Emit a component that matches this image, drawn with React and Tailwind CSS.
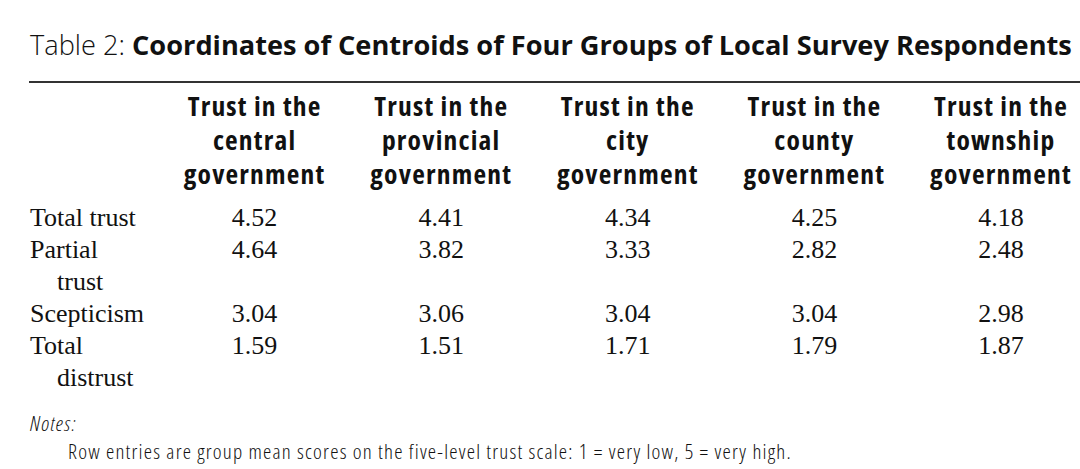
import React from 'react';

const columns = [
  ['Trust in the', 'central', 'government'],
  ['Trust in the', 'provincial', 'government'],
  ['Trust in the', 'city', 'government'],
  ['Trust in the', 'county', 'government'],
  ['Trust in the', 'township', 'government'],
];

const rows = [
  { label: 'Total trust', values: ['4.52', '4.41', '4.34', '4.25', '4.18'] },
  { label: 'Partial', rest: 'trust', values: ['4.64', '3.82', '3.33', '2.82', '2.48'] },
  { label: 'Scepticism', values: ['3.04', '3.06', '3.04', '3.04', '2.98'] },
  { label: 'Total', rest: 'distrust', values: ['1.59', '1.51', '1.71', '1.79', '1.87'] },
];

function App() {
  const sans = "font-['Open_Sans','Liberation_Sans',sans-serif]";
  const serif = "font-['Liberation_Serif','DejaVu_Serif',serif]";

  return (
    <div className="w-[1080px] h-[469px] bg-white text-[#111] overflow-hidden">
      {/* Caption */}
      <div className={`${sans} pl-[30px] pt-[26px] text-[27.2px] leading-[38px] whitespace-nowrap`}>
        <span className="font-light">Table 2: </span>
        <span className="font-bold">Coordinates of Centroids of Four Groups of Local Survey Respondents</span>
      </div>

      <div className="ml-[29px] mt-[17px] h-[2px] bg-[#333]" />

      {/* Table */}
      <div className="w-[1120px] pl-[30px] grid grid-cols-[118px_repeat(5,160px)] gap-x-[26.6px]">
        <div />
        {columns.map((lines, i) => (
          <div
            key={i}
            className={`${sans} font-stretch-condensed tracking-[1.2px] pt-[6px] font-bold text-[27.5px] leading-[34px] text-center whitespace-nowrap`}
          >
            {lines.map((l) => (
              <div key={l}>{l}</div>
            ))}
          </div>
        ))}

        <div className="col-span-6 h-[11px]" />

        {rows.map((row) => (
          <React.Fragment key={row.label}>
            <div className={`${serif} text-[26px] leading-[32px] whitespace-nowrap`}>
              <div>{row.label}</div>
              {row.rest && <div className="pl-[27px]">{row.rest}</div>}
            </div>
            {row.values.map((v, i) => (
              <div key={i} className={`${serif} text-[26px] leading-[32px] text-center`}>
                {v}
              </div>
            ))}
          </React.Fragment>
        ))}
      </div>

      {/* Notes */}
      <div className={`${sans} font-stretch-condensed tracking-[1.2px] pl-[30px] pt-[15px] text-[21px] leading-[28px] font-light`}>
        <div className="italic">Notes:</div>
        <div className="pl-[38px] whitespace-nowrap">
          Row entries are group mean scores on the five-level trust scale: 1 = very low, 5 = very high.
        </div>
      </div>
    </div>
  );
}

export default App;
